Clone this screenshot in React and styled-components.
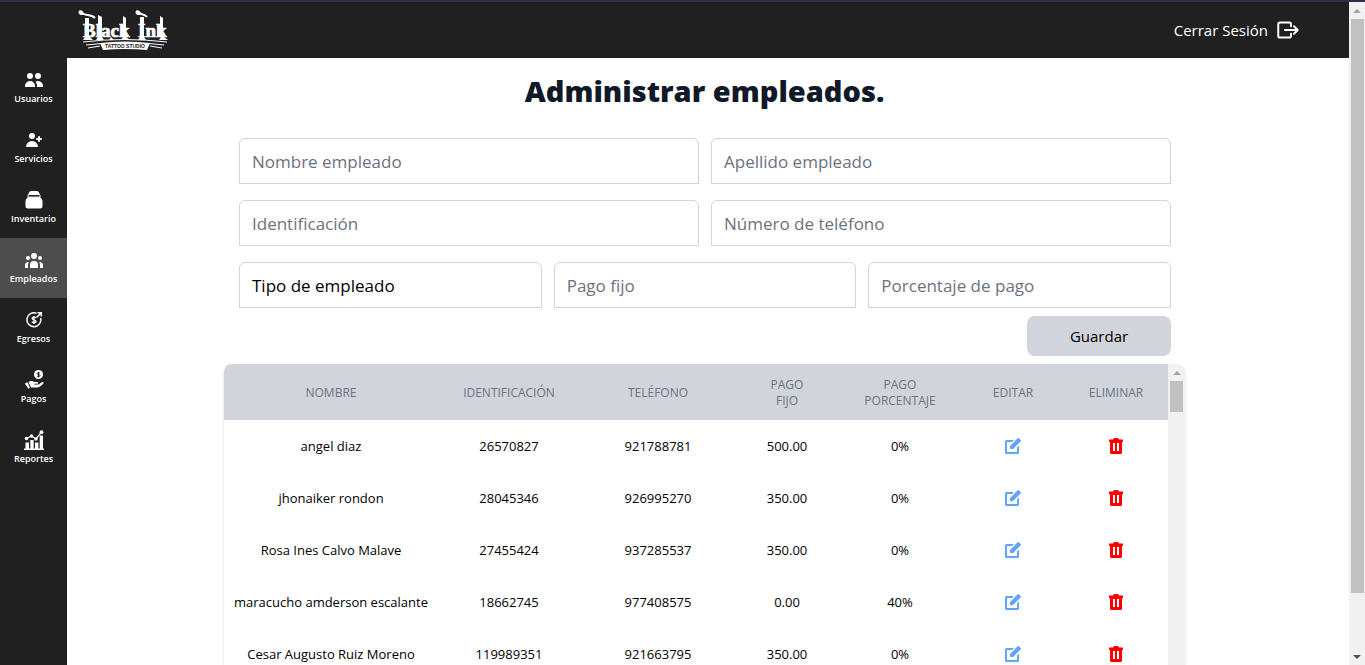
import React from "react";
import styled, { createGlobalStyle } from "styled-components";
import { HiUsers, HiUserAdd, HiUserGroup } from "react-icons/hi";
import { IoExitOutline } from "react-icons/io5";

const GlobalStyle = createGlobalStyle`
  *, *::before, *::after { box-sizing: border-box; }
  body {
    margin: 0;
    background: #fff;
    color: #000;
    font-family: "Open Sans", "Noto Sans", sans-serif;
  }
  button, input, select { font: inherit; color: inherit; }
`;

const Page = styled.div`
  display: flex;
  height: 100vh;
  overflow: hidden;
  border-top: 2px solid #2f3044;
`;

const Shell = styled.div`
  flex: 1;
  min-width: 0;
  display: flex;
  flex-direction: column;
`;

const Header = styled.header`
  flex: none;
  height: 56px;
  padding: 0 49px 0 78px;
  display: flex;
  align-items: center;
  justify-content: space-between;
  background: #202020;
  color: #fff;
`;

const LogoutButton = styled.button`
  display: flex;
  align-items: center;
  gap: 8px;
  padding: 0;
  border: 0;
  background: none;
  font-size: 15px;
  line-height: 24px;
  svg { width: 24px; height: 24px; }
  path { stroke-width: 42px; }
`;

const Body = styled.div`
  flex: 1;
  min-height: 0;
  display: flex;
`;

const Sidebar = styled.nav`
  flex: none;
  width: 67px;
  background: #202020;
`;

const NavLink = styled.a`
  height: 60px;
  display: flex;
  flex-direction: column;
  align-items: center;
  padding-top: 12px;
  color: #fff;
  background: ${(p) => (p.$active ? "#4d4d4d" : "transparent")};
  font-size: 9px;
  font-weight: 600;
  line-height: 18px;
  text-decoration: none;
  svg { width: 20px; height: 20px; }
`;

const Content = styled.main`
  flex: 1;
  min-width: 0;
  display: flex;
  flex-direction: column;
  padding: 16px 164px 0 157px;
`;

const Title = styled.h1`
  flex: none;
  margin: 0 0 30px;
  color: #111827;
  font-size: 29px;
  font-weight: 800;
  line-height: 34px;
  text-align: center;
`;

const Form = styled.form`
  flex: none;
  display: flex;
  flex-direction: column;
  gap: 16px;
  padding: 0 14px 8px 15px;
`;

const FieldRow = styled.div`
  display: flex;
  gap: 12px;
`;

const fieldStyle = `
  flex: 1;
  min-width: 0;
  width: 100%;
  height: 46px;
  padding: 0 12px;
  border: 1px solid #d1d5db;
  border-radius: 6px 6px 0 0;
  background: #fff;
  font-size: 17px;
  outline: none;
`;

const Input = styled.input`
  ${fieldStyle}
  &::placeholder { color: #6b7280; opacity: 1; }
`;

const Select = styled.select`
  ${fieldStyle}
  appearance: none;
`;

const SaveButton = styled.button`
  align-self: flex-end;
  width: 144px;
  height: 40px;
  margin-top: -8px;
  border: 0;
  border-radius: 8px;
  background: #d1d5db;
  font-size: 15px;
`;

const TableCard = styled.section`
  flex: 1;
  min-height: 0;
  display: flex;
  overflow: hidden;
  border-radius: 8px 8px 0 0;
  box-shadow: 0 1px 3px rgba(0, 0, 0, 0.15);
`;

const TableView = styled.div`
  flex: 1;
  min-width: 0;
  overflow: hidden;
`;

const Table = styled.table`
  width: 100%;
  table-layout: fixed;
  border-collapse: collapse;
  text-align: center;
`;

const Col = styled.col`
  width: ${(p) => p.$w}px;
`;

const Th = styled.th`
  height: 56px;
  padding: 2px ${(p) => (p.$roomy ? 24 : 8)}px 0;
  background: #d1d5db;
  color: #6b7280;
  font-size: 12px;
  font-weight: 500;
  line-height: 16px;
  text-transform: uppercase;
`;

const Td = styled.td`
  height: 52px;
  padding: 0;
  font-size: 13px;
  line-height: 20px;
  white-space: nowrap;
`;

const IconButton = styled.button`
  display: flex;
  margin: 0 auto;
  padding: 0;
  border: 0;
  background: none;
  color: ${(p) => (p.$danger ? "#ff0000" : "#60a5fa")};
`;

const ScrollTrack = styled.div`
  flex: none;
  width: ${(p) => p.$w}px;
  display: flex;
  flex-direction: column;
  align-items: center;
  background: #f1f1f1;
`;

const ScrollArrow = styled.span`
  flex: none;
  height: 17px;
  display: flex;
  align-items: center;
  &::before {
    content: "";
    border: 4px solid transparent;
    border-top-width: ${(p) => (p.$down ? 4 : 0)}px;
    border-bottom-width: ${(p) => (p.$down ? 0 : 4)}px;
    border-top-color: #505050;
    border-bottom-color: #a3a3a3;
  }
`;

const ScrollThumb = styled.span`
  width: 13px;
  height: ${(p) => p.$h};
  background: #c1c1c1;
`;

const ScrollSpace = styled.span`
  flex: 1;
`;

const Logo = () => (
  <svg width="94" height="42" viewBox="0 0 94 42" fill="#fff" role="img" aria-label="Black Ink Tattoo Studio">
    <g fontFamily="'Liberation Serif', serif" fontWeight="700" fontSize="19" stroke="#fff" strokeWidth="0.700">
      <text x="5" y="28">Black</text>
      <text x="60" y="28">Ink</text>
    </g>
    <path d="M7 9h4v19H7zM20 6l4 2v20h-4zM45 7l3 2v19h-3zM62 8h4v22h-4zM82 7l3 2v19h-3z" />
    <path d="M5 31l2-3h5l3 3zM18 31l2-3h4l2 3zM31 31l2-3 3 3zM43 31l2-3h3l4 3zM60 31l2-3h4l2 3zM81 31l2-3h3l4 3z" />
    <g fill="none" stroke="#fff">
      <path d="M5 5C0 6 1 0 4 3c2 5 8 1 13 6M62 5c-5 1-4-5-1-2c2 4 5 1 8 5" strokeWidth="2" />
      <path d="M5 33q41-5 84 0M8 36l15-1.500M86 36l-15-1.500M10 39l12-2M84 39l-12-2" />
    </g>
    <path d="M22 34q25-3 50 0l-3 7q-22-2-44 0z" />
    <text x="47" y="39" textAnchor="middle" fill="#202020" fontFamily="'Liberation Sans', sans-serif" fontWeight="700" fontSize="5">TATTOO STUDIO</text>
  </svg>
);

const InventoryIcon = () => (
  <svg viewBox="0 0 20 20" fill="#fff">
    <path d="M7 1h6q1.500 0 2 1.500L16 5H4l1-2.500Q5.500 1 7 1z" />
    <path d="M4 6.500h12v2H4z" fill="#d8d8d8" />
    <path d="M4 7.500h12q2.500 1 2.500 3.500v5q0 2.500-2.500 2.500H4Q1.500 18.500 1.500 16v-5Q1.500 8.500 4 7.500zM3.500 5h1v3h-1zM15.500 5h1v3h-1z" />
  </svg>
);

const ExpensesIcon = () => (
  <svg viewBox="0 0 20 20" fill="none" stroke="#fff" strokeWidth="1.500">
    <path d="M12.500 3.200A7 7 0 1 0 16.700 8" />
    <path d="M12.500 7.500L17 3M13.500 2.700h3.800v3.800" />
    <path d="M12 8c-.7-1-3.800-1.200-3.900.4c-.1 1.800 3.900 1.200 3.900 3c0 1.700-3.300 1.600-4.100.3M10 6v8" strokeWidth="1.300" />
  </svg>
);

const PaymentsIcon = () => (
  <svg viewBox="0 0 20 20" fill="#fff">
    <circle cx="14.500" cy="4.500" r="4.500" />
    <path d="M16 3.300c-.5-.8-2.800-.8-2.800.3c0 1.300 2.800.8 2.800 2c0 1.200-2.400 1.200-3 .3M14.500 1.800v5.600" fill="none" stroke="#202020" />
    <path d="M.800 13.500l2.600-1.200 2.600 5.500-1.600 1z" />
    <path d="M4.500 12.500C6.500 10 9 11 10.500 12h3q1.300.7.200 1.800H10v.8h4.500l3.700-2.600q1.700-.3 1.300 1.200c-2 2.400-4.200 4-6 4.300H7.200z" />
  </svg>
);

const ReportsIcon = () => (
  <svg viewBox="0 0 20 20" fill="#fff">
    <path d="M0 18.500h20V20H0zM1.500 12.500h3.500v6h-3.500zM6.300 10h3.400v8.500h-3.400zM11 12.500h3.400v6h-3.400zM15.700 5.500h3.300v13h-3.300z" />
    <path d="M2.500 8.500L7.500 6l4.500 3 5.500-6.800" fill="none" stroke="#fff" strokeWidth="1.300" />
    <circle cx="2.500" cy="8.500" r="1.700" />
    <circle cx="7.500" cy="6" r="1.700" />
    <circle cx="12" cy="9" r="1.700" />
    <circle cx="17.500" cy="2.200" r="1.900" />
  </svg>
);

const EditIcon = () => (
  <svg width="16" height="16" viewBox="0 0 16 16" fill="currentColor">
    <path d="M9 2L7 4H2v10h10V9.500l2-2v7q0 1.500-1.500 1.500h-11Q0 16 0 14.500v-11Q0 2 1.500 2z" />
    <path d="M5 11V8l5.800-5.800 3 3L8 11zM11.500 1.500L12.700.3q.6-.5 1.200 0l1.800 1.800q.5.600 0 1.200l-1.200 1.200z" />
    <path d="M10.500 2.500l1.500-1.500 3 3-1.500 1.500z" />
  </svg>
);

const TrashIcon = () => (
  <svg width="14" height="16" viewBox="0 0 14 16" fill="currentColor" fillRule="evenodd">
    <path d="M4 1.500Q4 0 5.500 0h3Q10 0 10 1.500h4V4H0V1.500z" />
    <path d="M1 4h12v10.500q0 1.500-1.500 1.500h-9Q1 16 1 14.500zM4 5v8h2V5zM8 5v8h2V5z" />
  </svg>
);

const NAV = [
  ["Usuarios", HiUsers],
  ["Servicios", HiUserAdd],
  ["Inventario", InventoryIcon],
  ["Empleados", HiUserGroup],
  ["Egresos", ExpensesIcon],
  ["Pagos", PaymentsIcon],
  ["Reportes", ReportsIcon],
];

const COLUMNS = [
  { name: "Nombre", width: 214 },
  { name: "Identificación", width: 142 },
  { name: "Teléfono", width: 156 },
  { name: "Pago fijo", width: 102, roomy: true },
  { name: "Pago porcentaje", width: 124, roomy: true },
  { name: "Editar", width: 102 },
  { name: "Eliminar", width: 104 },
];

const EMPLOYEES = [
  ["angel diaz", "26570827", "921788781", "500.00", "0%"],
  ["jhonaiker rondon", "28045346", "926995270", "350.00", "0%"],
  ["Rosa Ines Calvo Malave", "27455424", "937285537", "350.00", "0%"],
  ["maracucho amderson escalante", "18662745", "977408575", "0.00", "40%"],
  ["Cesar Augusto Ruiz Moreno", "119989351", "921663795", "350.00", "0%"],
];

const TextField = ({ label }) => <Input type="text" placeholder={label} aria-label={label} />;

export default function App() {
  return (
    <>
      <GlobalStyle />
      <Page>
        <Shell>
          <Header>
            <Logo />
            <LogoutButton type="button">
              Cerrar Sesión
              <IoExitOutline />
            </LogoutButton>
          </Header>
          <Body>
            <Sidebar>
              {NAV.map(([label, Icon]) => (
                <NavLink key={label} href="#" $active={label === "Empleados"}>
                  <Icon />
                  {label}
                </NavLink>
              ))}
            </Sidebar>
            <Content>
              <Title>Administrar empleados.</Title>
              <Form>
                <FieldRow>
                  <TextField label="Nombre empleado" />
                  <TextField label="Apellido empleado" />
                </FieldRow>
                <FieldRow>
                  <TextField label="Identificación" />
                  <TextField label="Número de teléfono" />
                </FieldRow>
                <FieldRow>
                  <Select aria-label="Tipo de empleado">
                    <option>Tipo de empleado</option>
                  </Select>
                  <TextField label="Pago fijo" />
                  <TextField label="Porcentaje de pago" />
                </FieldRow>
                <SaveButton type="button">Guardar</SaveButton>
              </Form>
              <TableCard>
                <TableView>
                  <Table>
                    <colgroup>
                      {COLUMNS.map((c) => (
                        <Col key={c.name} $w={c.width} />
                      ))}
                    </colgroup>
                    <thead>
                      <tr>
                        {COLUMNS.map((c) => (
                          <Th key={c.name} scope="col" $roomy={c.roomy}>{c.name}</Th>
                        ))}
                      </tr>
                    </thead>
                    <tbody>
                      {EMPLOYEES.map((row) => (
                        <tr key={row[1]}>
                          {row.map((cell, i) => (
                            <Td key={i}>{cell}</Td>
                          ))}
                          <Td>
                            <IconButton type="button" aria-label={`Editar ${row[0]}`}>
                              <EditIcon />
                            </IconButton>
                          </Td>
                          <Td>
                            <IconButton type="button" $danger aria-label={`Eliminar ${row[0]}`}>
                              <TrashIcon />
                            </IconButton>
                          </Td>
                        </tr>
                      ))}
                    </tbody>
                  </Table>
                </TableView>
                <ScrollTrack $w={17} aria-hidden="true">
                  <ScrollArrow />
                  <ScrollThumb $h="31px" />
                </ScrollTrack>
              </TableCard>
            </Content>
          </Body>
        </Shell>
        <ScrollTrack $w={16} aria-hidden="true">
          <ScrollArrow />
          <ScrollThumb $h="574px" />
          <ScrollSpace />
          <ScrollArrow $down />
        </ScrollTrack>
      </Page>
    </>
  );
}
